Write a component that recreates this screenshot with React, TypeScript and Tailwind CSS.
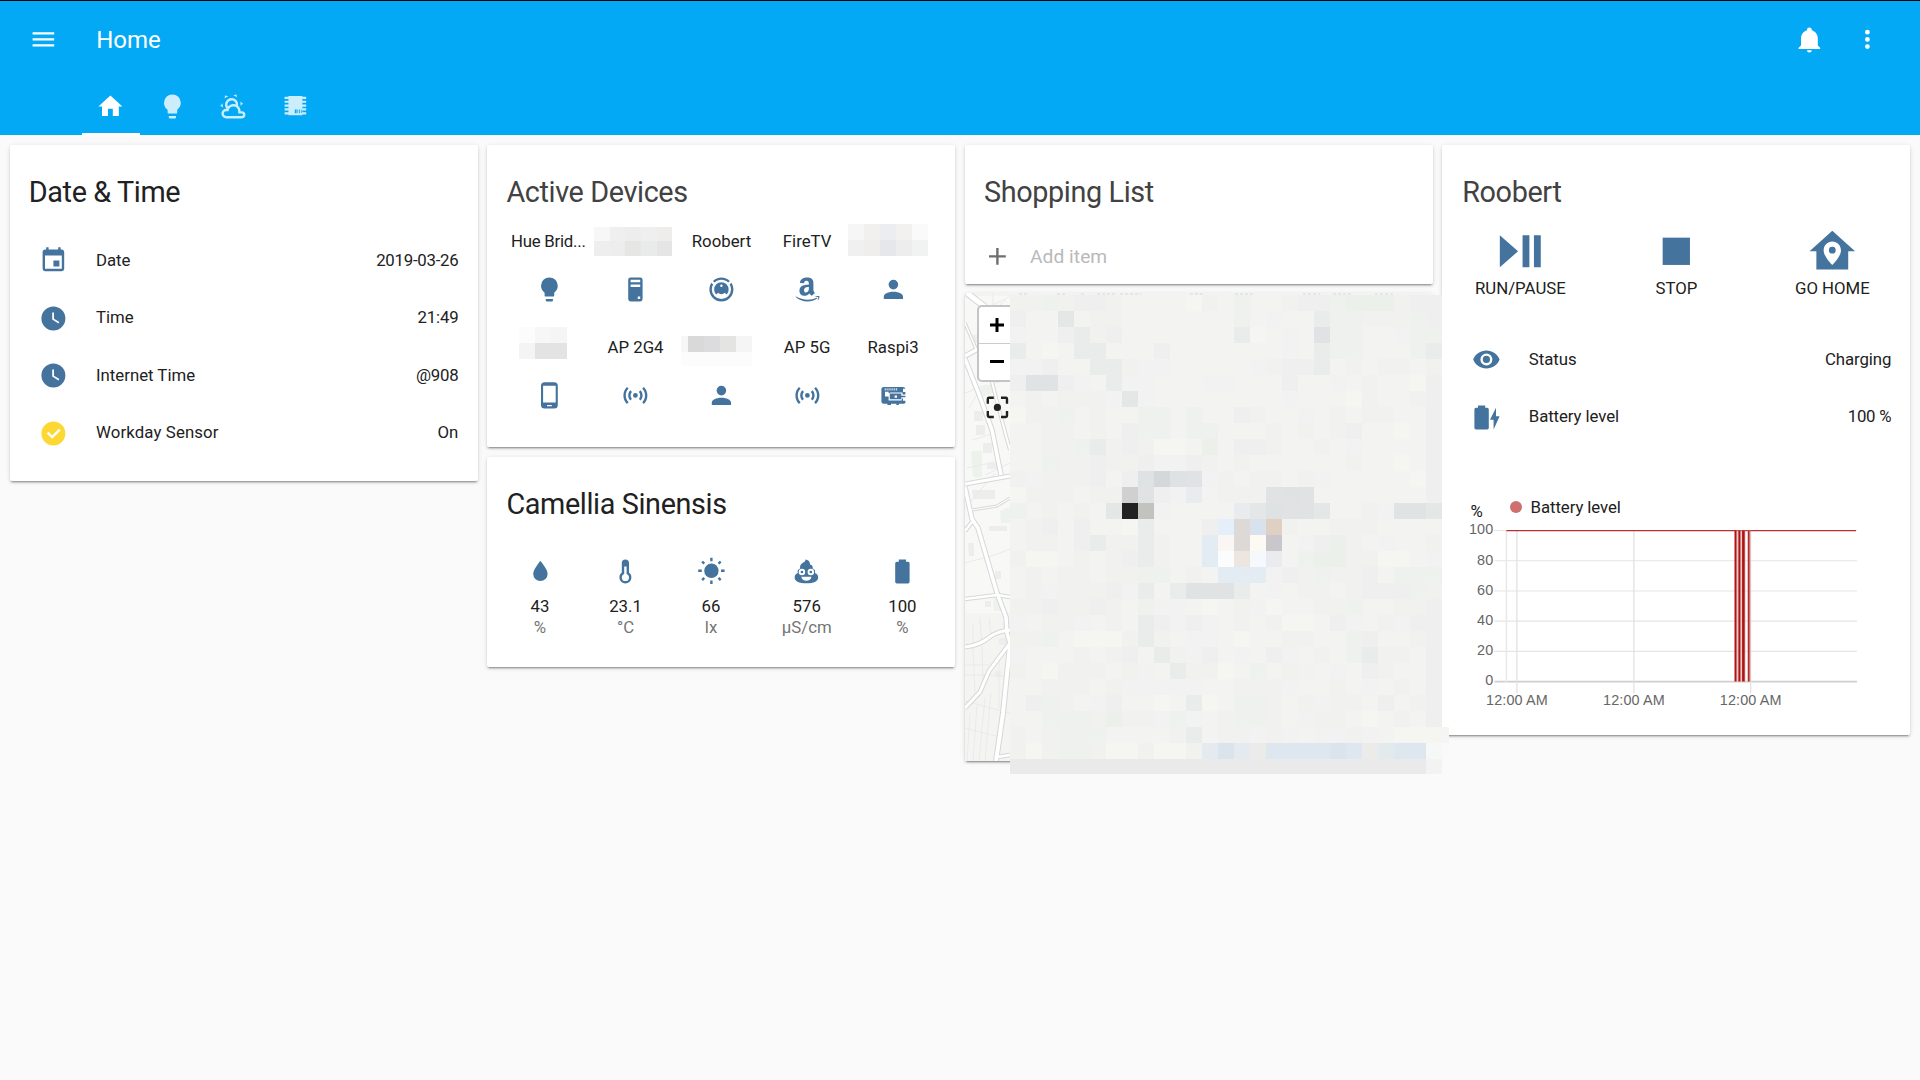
import React from 'react';

const ICONS = {
  menu: 'M3,6H21V8H3V6M3,11H21V13H3V11M3,16H21V18H3V16Z',
  home: 'M10,20V14H14V20H19V12H22L12,3L2,12H5V20H10Z',
  lightbulb:
    'M12,2A7,7 0 0,0 5,9C5,11.38 6.19,13.47 8,14.74V17A1,1 0 0,0 9,18H15A1,1 0 0,0 16,17V14.74C17.81,13.47 19,11.38 19,9A7,7 0 0,0 12,2M9,21A1,1 0 0,0 10,22H14A1,1 0 0,0 15,21V20H9V21Z',
  weather:
    'M12.74,5.47C15.1,6.5 16.35,9.03 15.92,11.46C17.19,12.56 18,14.19 18,16V16.17C18.31,16.06 18.65,16 19,16A3,3 0 0,1 22,19A3,3 0 0,1 19,22H6A4,4 0 0,1 2,18A4,4 0 0,1 6,14H6.27C5,12.45 4.6,10.24 5.5,8.26C6.72,5.5 9.97,4.24 12.74,5.47M11.93,7.3C10.16,6.5 8.09,7.31 7.31,9.07C6.85,10.09 6.93,11.22 7.41,12.13C8.5,10.83 10.16,10 12,10C12.7,10 13.38,10.12 14,10.34C13.94,9.06 13.18,7.86 11.93,7.3M13.55,3.64C13,3.4 12.45,3.23 11.88,3.12L14.37,1.82L15.27,4.71C14.76,4.29 14.19,3.93 13.55,3.64M6.09,4.44C5.6,4.79 5.17,5.19 4.8,5.63L4.91,2.82L7.87,3.5C7.25,3.71 6.65,4.03 6.09,4.44M18,9.71C17.91,9.12 17.78,8.55 17.59,8L19.97,9.5L17.92,11.73C18.03,11.08 18.05,10.4 18,9.71M3.04,11.3C3.11,11.9 3.24,12.47 3.43,13L1.06,11.5L3.1,9.28C3,9.93 2.97,10.61 3.04,11.3M19,18H16V16A4,4 0 0,0 12,12A4,4 0 0,0 8,16H6A2,2 0 0,0 4,18A2,2 0 0,0 6,20H19A1,1 0 0,0 20,19A1,1 0 0,0 19,18Z',
  chip: 'M6.2,3.4H17.8V4H21V5.8H17.8V7.2H21V9H17.8V10.4H21V12.2H17.8V13.6H21V15.4H17.8V16.8H21V18.8H17.8V19.4H6.2V18.8H3V16.8H6.2V15.4H3V13.6H6.2V12.2H3V10.4H6.2V9H3V7.2H6.2V5.8H3V4H6.2V3.4M11.5,14.6V17.8H13V14.6H11.5M13.7,14.6V17.8H14.3V14.6H13.7M15.1,14.6V17.8H15.8V14.6H15.1M16.6,14.6V17.8H17.2V14.6H16.6Z',
  bell: 'M21,19V20H3V19L5,17V11C5,7.9 7.03,5.17 10,4.29C10,4.19 10,4.1 10,4A2,2 0 0,1 12,2A2,2 0 0,1 14,4C14,4.1 14,4.19 14,4.29C16.97,5.17 19,7.9 19,11V17L21,19M14,21A2,2 0 0,1 12,23A2,2 0 0,1 10,21',
  dots: 'M12,16A2,2 0 0,1 14,18A2,2 0 0,1 12,20A2,2 0 0,1 10,18A2,2 0 0,1 12,16M12,10A2,2 0 0,1 14,12A2,2 0 0,1 12,14A2,2 0 0,1 10,12A2,2 0 0,1 12,10M12,4A2,2 0 0,1 14,6A2,2 0 0,1 12,8A2,2 0 0,1 10,6A2,2 0 0,1 12,4Z',
  calendar:
    'M19,19H5V8H19M16,1V3H8V1H6V3H5C3.89,3 3,3.89 3,5V19A2,2 0 0,0 5,21H19A2,2 0 0,0 21,19V5C21,3.89 20.1,3 19,3H18V1M17,12H12V17H17V12Z',
  clock:
    'M12,2A10,10 0 0,0 2,12A10,10 0 0,0 12,22A10,10 0 0,0 22,12A10,10 0 0,0 12,2M16.2,16.2L11,13V7H12.5V12.2L17,14.9L16.2,16.2Z',
  check:
    'M12,2A10,10 0 0,1 22,12A10,10 0 0,1 12,22A10,10 0 0,1 2,12A10,10 0 0,1 12,2M11,16.5L18,9.5L16.59,8.09L11,13.67L7.91,10.59L6.5,12L11,16.5Z',
  tower:
    'M8,2H16A2,2 0 0,1 18,4V20A2,2 0 0,1 16,22H8A2,2 0 0,1 6,20V4A2,2 0 0,1 8,2M8,4V6H16V4H8M16,8H8V10H16V8M16,18H14V20H16V18Z',
  vacuum:
    'M12,2C14.65,2 17.19,3.06 19.07,4.93L17.65,6.35C16.15,4.85 14.12,4 12,4C9.88,4 7.84,4.84 6.35,6.35L4.93,4.93C6.81,3.06 9.35,2 12,2M3.66,6.5L5.11,7.94C4.39,9.17 4,10.57 4,12A8,8 0 0,0 12,20A8,8 0 0,0 20,12C20,10.57 19.61,9.17 18.88,7.94L20.34,6.5C21.42,8.12 22,10.04 22,12A10,10 0 0,1 12,22A10,10 0 0,1 2,12C2,10.04 2.58,8.12 3.66,6.5M12,6A6,6 0 0,1 18,12C18,13.59 17.37,15.12 16.24,16.24L14.83,14.83C14.08,15.58 13.06,16 12,16C10.94,16 9.92,15.58 9.17,14.83L7.76,16.24C6.63,15.12 6,13.59 6,12A6,6 0 0,1 12,6M12,8A1,1 0 0,0 11,9A1,1 0 0,0 12,10A1,1 0 0,0 13,9A1,1 0 0,0 12,8Z',
  amazon:
    'M15.93,17.09C15.75,17.25 15.5,17.26 15.3,17.15C14.41,16.41 14.25,16.07 13.76,15.36C12.29,16.86 11.25,17.31 9.34,17.31C7.09,17.31 5.33,15.92 5.33,13.14C5.33,10.96 6.5,9.5 8.19,8.76C9.65,8.12 11.68,8 13.23,7.83V7.5C13.23,6.84 13.28,6.09 12.9,5.54C12.58,5.05 11.95,4.84 11.4,4.84C10.38,4.84 9.47,5.37 9.25,6.45C9.2,6.69 9,6.93 8.78,6.94L6.18,6.66C5.96,6.61 5.72,6.44 5.78,6.1C6.38,2.95 9.23,2 11.78,2C13.08,2 14.78,2.35 15.81,3.33C17.11,4.55 17,6.18 17,7.95V12.12C17,13.37 17.5,13.93 18,14.6C18.17,14.85 18.21,15.14 18,15.31L15.94,17.09H15.93M13.23,10.56V10C11.29,10 9.24,10.39 9.24,12.67C9.24,13.83 9.85,14.62 10.87,14.62C11.63,14.62 12.3,14.15 12.73,13.4C13.25,12.47 13.23,11.6 13.23,10.56M20.16,19.54C18,21.14 14.82,22 12.1,22C8.29,22 4.85,20.59 2.25,18.24C2.05,18.06 2.23,17.81 2.5,17.95C5.28,19.58 8.75,20.56 12.33,20.56C14.74,20.56 17.4,20.06 19.84,19.03C20.21,18.87 20.5,19.27 20.16,19.54M21.07,18.5C20.79,18.14 19.22,18.33 18.5,18.42C18.31,18.44 18.28,18.26 18.47,18.12C19.71,17.24 21.76,17.5 22,17.79C22.24,18.09 21.93,20.14 20.76,21.11C20.58,21.27 20.41,21.18 20.5,21C20.76,20.33 21.35,18.86 21.07,18.5Z',
  account:
    'M12,4A4,4 0 0,1 16,8A4,4 0 0,1 12,12A4,4 0 0,1 8,8A4,4 0 0,1 12,4M12,14C16.42,14 20,15.79 20,18V20H4V18C4,15.79 7.58,14 12,14Z',
  phone:
    'M17.25,18H6.75V4H17.25M14,21H10V20H14M16,1H8A3,3 0 0,0 5,4V20A3,3 0 0,0 8,23H16A3,3 0 0,0 19,20V4A3,3 0 0,0 16,1Z',
  accessPoint:
    'M4.93,4.93C3.12,6.74 2,9.24 2,12C2,14.76 3.12,17.26 4.93,19.07L6.34,17.66C4.89,16.22 4,14.22 4,12C4,9.79 4.89,7.78 6.34,6.34L4.93,4.93M19.07,4.93L17.66,6.34C19.11,7.78 20,9.79 20,12C20,14.22 19.11,16.22 17.66,17.66L19.07,19.07C20.88,17.26 22,14.76 22,12C22,9.24 20.88,6.74 19.07,4.93M7.76,7.76C6.67,8.85 6,10.35 6,12C6,13.65 6.67,15.15 7.76,16.24L9.17,14.83C8.45,14.11 8,13.11 8,12C8,10.89 8.45,9.89 9.17,9.17L7.76,7.76M16.24,7.76L14.83,9.17C15.55,9.89 16,10.89 16,12C16,13.11 15.55,14.11 14.83,14.83L16.24,16.24C17.33,15.15 18,13.65 18,12C18,10.35 17.33,8.85 16.24,7.76M12,10A2,2 0 0,0 10,12A2,2 0 0,0 12,14A2,2 0 0,0 14,12A2,2 0 0,0 12,10Z',
  board:
    'M4,4.9H20A2,2 0 0,1 22,6.5H20V9.2H22V11.2H19.6V9.6H9V10.2H8V9H5V13H8V16.2H19V14.6H20V16.4H22V18A1.4,1.4 0 0,1 20.6,19H16.5V20H14.5V19H10V20H7V19H4A2,2 0 0,1 2,17V7A2,2 0 0,1 4,4.9M4.8,6V8H5.5V6H4.8M6.4,6V8H7.1V6H6.4M8,6V8H8.7V6H8M9.6,6V8H10.3V6H9.6M11.2,6V8H11.9V6H11.2M12.8,6V8H13.5V6H12.8M14.4,6V8H15.1V6H14.4M9,10.4V15.2H18.6V13.6H22V12.3H18.6V10.4H9M13,12V14H15V12H13Z',
  water: 'M12,20A6,6 0 0,1 6,14C6,10 12,3.25 12,3.25C12,3.25 18,10 18,14A6,6 0 0,1 12,20Z',
  thermometer:
    'M17,17A5,5 0 0,1 12,22A5,5 0 0,1 7,17C7,15.36 7.79,13.91 9,13V5A3,3 0 0,1 12,2A3,3 0 0,1 15,5V13C16.21,13.91 17,15.36 17,17M11,8V14.17C9.83,14.58 9,15.69 9,17A3,3 0 0,0 12,20A3,3 0 0,0 15,17C15,15.69 14.17,14.58 13,14.17V8H11Z',
  sun: 'M3.55,18.54L4.96,19.95L6.76,18.16L5.34,16.74M11,22.45C11.32,22.45 13,22.45 13,22.45V19.5H11M12,5.5A6,6 0 0,0 6,11.5A6,6 0 0,0 12,17.5A6,6 0 0,0 18,11.5C18,8.18 15.31,5.5 12,5.5M20,12.5H23V10.5H20M17.24,18.16L19.04,19.95L20.45,18.54L18.66,16.74M20.45,4.46L19.04,3.05L17.24,4.84L18.66,6.26M13,0.55H11V3.5H13M4,10.5H1V12.5H4M6.76,4.84L4.96,3.05L3.55,4.46L5.34,6.26L6.76,4.84Z',
  poop: 'M11.2,2C11.2,3.4 10.8,3.7 9.7,4.4C7.6,5.6 6.2,7.2 6.8,9.6C4.9,10 4.3,11.8 4.9,13.3C3,13.8 2.2,15.4 2.2,17C2.2,20.3 6,21.9 12,21.9C18,21.9 21.8,20.3 21.8,17C21.8,15.4 21,13.8 19.1,13.3C19.7,11.8 19.1,10 17.2,9.6C17.7,7.6 16.6,6.4 15.1,6.2C15.1,3.9 13.6,2.3 11.2,2M8.3,9.8A2.7,2.7 0 0,1 11,12.5A2.7,2.7 0 0,1 8.3,15.2A2.7,2.7 0 0,1 5.6,12.5A2.7,2.7 0 0,1 8.3,9.8M15.7,9.8A2.7,2.7 0 0,1 18.4,12.5A2.7,2.7 0 0,1 15.7,15.2A2.7,2.7 0 0,1 13,12.5A2.7,2.7 0 0,1 15.7,9.8M8.3,11.4A1.1,1.1 0 0,0 7.2,12.5A1.1,1.1 0 0,0 8.3,13.6A1.1,1.1 0 0,0 9.4,12.5A1.1,1.1 0 0,0 8.3,11.4M15.7,11.4A1.1,1.1 0 0,0 14.6,12.5A1.1,1.1 0 0,0 15.7,13.6A1.1,1.1 0 0,0 16.8,12.5A1.1,1.1 0 0,0 15.7,11.4M7.8,16.4H16.2C16,18.4 14.2,19.7 12,19.7C9.8,19.7 8,18.4 7.8,16.4Z',
  battery:
    'M16.67,4H15V2H9V4H7.33A1.33,1.33 0 0,0 6,5.33V20.67C6,21.4 6.6,22 7.33,22H16.67A1.33,1.33 0 0,0 18,20.67V5.33C18,4.6 17.4,4 16.67,4Z',
  plus: 'M19,13H13V19H11V13H5V11H11V5H13V11H19V13Z',
  focus:
    'M12,9A3,3 0 0,0 9,12A3,3 0 0,0 12,15A3,3 0 0,0 15,12A3,3 0 0,0 12,9M19,19H15V21H19A2,2 0 0,0 21,19V15H19M19,3H15V5H19V9H21V5A2,2 0 0,0 19,3M5,5H9V3H5A2,2 0 0,0 3,5V9H5M5,15H3V19A2,2 0 0,0 5,21H9V19H5V15Z',
  playPause: 'M3,5V19L11,12M13,19H16V5H13M18,5V19H21V5',
  stop: 'M18,18H6V6H18V18Z',
  homeMarker:
    'M12,3L2,12H5V20H19V12H22L12,3M12,7.7C14.1,7.7 15.8,9.4 15.8,11.5C15.8,14.5 12,18 12,18C12,18 8.2,14.5 8.2,11.5C8.2,9.4 9.9,7.7 12,7.7M12,10A1.5,1.5 0 0,0 10.5,11.5A1.5,1.5 0 0,0 12,13A1.5,1.5 0 0,0 13.5,11.5A1.5,1.5 0 0,0 12,10Z',
  eye: 'M12,9A3,3 0 0,0 9,12A3,3 0 0,0 12,15A3,3 0 0,0 15,12A3,3 0 0,0 12,9M12,17A5,5 0 0,1 7,12A5,5 0 0,1 12,7A5,5 0 0,1 17,12A5,5 0 0,1 12,17M12,4.5C7,4.5 2.73,7.61 1,12C2.73,16.39 7,19.5 12,19.5C17,19.5 21.27,16.39 23,12C21.27,7.61 17,4.5 12,4.5Z',
  charging:
    'M23,11H20V4L15,14H18V22M12.67,4H11V2H5V4H3.33A1.33,1.33 0 0,0 2,5.33V20.67C2,21.4 2.6,22 3.33,22H12.67A1.33,1.33 0 0,0 14,20.67V5.33C14,4.6 13.4,4 12.67,4Z',
};

type IconName = keyof typeof ICONS;

function Icon({ name, className = '' }: { name: IconName; className?: string }) {
  return (
    <svg viewBox="0 0 24 24" fill="currentColor" fillRule="evenodd" className={`block shrink-0 ${className}`}>
      <path d={ICONS[name]} />
    </svg>
  );
}

const ICON = 'h-[28.8px] w-[28.8px]';

function Card({ className = '', children }: { className?: string; children?: React.ReactNode }) {
  return (
    <section
      className={`relative mx-[4.8px] rounded-[2px] bg-white shadow-[0_2px_2px_0_rgba(0,0,0,0.14),0_1px_5px_0_rgba(0,0,0,0.12),0_3px_1px_-2px_rgba(0,0,0,0.2)] ${className}`}
    >
      {children}
    </section>
  );
}

function Title({ dim = false, children }: { dim?: boolean; children: React.ReactNode }) {
  return (
    <h2
      className={`h-[48px] pt-px text-[28.8px] leading-[48px] font-normal tracking-[-0.013em] ${dim ? 'text-[#424242]' : 'text-[#212121]'}`}
    >
      {children}
    </h2>
  );
}

interface RowProps {
  icon: IconName;
  label: string;
  value: string;
  color?: string;
  labelClass?: string;
  valueClass?: string;
}

function Row({ icon, label, value, color = 'text-[#44739e]', labelClass = '', valueClass = '' }: RowProps) {
  return (
    <div className="flex h-[48px] items-center">
      <div className={`flex h-[48px] w-[48px] items-center justify-center pt-[0.6px] pl-[0.8px] ${color}`}>
        <Icon name={icon} className={ICON} />
      </div>
      <div className={`ml-[19.2px] flex-1 pb-[1.2px] ${labelClass}`}>{label}</div>
      <div className={`pb-[1.2px] ${valueClass}`}>{value}</div>
    </div>
  );
}

function Mosaic({ rows, className }: { rows: string[][]; className: string }) {
  return (
    <div className={`absolute flex flex-col overflow-hidden ${className}`}>
      {rows.map((row, i) => (
        <div key={i} className="flex flex-1">
          {row.map((c, j) => (
            <div key={j} className="flex-1" style={{ backgroundColor: c }} />
          ))}
        </div>
      ))}
    </div>
  );
}

const DEVICES: { name?: string; icon: IconName; cover?: React.ReactNode; nameClass?: string }[] = [
  { name: 'Hue Brid...', icon: 'lightbulb', nameClass: 'tracking-[-0.25px] -ml-[2px]' },
  {
    icon: 'tower',
    cover: (
      <Mosaic
        className="top-[-2px] left-[2px] h-[29px] w-[78px]"
        rows={[
          ['#f7f7f7', '#efefef', '#ededed', '#efefef', '#eeedeb'],
          ['#eeeeee', '#ededed', '#e6e6e4', '#e8ebe9', '#e5e5e5'],
        ]}
      />
    ),
  },
  { name: 'Roobert', icon: 'vacuum', nameClass: 'ml-[0.6px]' },
  { name: 'FireTV', icon: 'amazon' },
  {
    icon: 'account',
    cover: (
      <Mosaic
        className="top-[-5px] left-[-2px] h-[32px] w-[80px]"
        rows={[
          ['#f6f6f6', '#f2f0ef', '#ecedf0', '#f2f1ef', '#fafafa'],
          ['#f0f0f0', '#f0eeec', '#e5e7ea', '#ededee', '#f0f3f2'],
        ]}
      />
    ),
  },
  {
    icon: 'phone',
    cover: (
      <Mosaic
        className="top-[-8px] left-[13px] h-[32px] w-[48px]"
        rows={[
          ['#fcfcfc', '#f7f7f7', '#f5f5f5'],
          ['#f5f4f2', '#e3e3e3', '#e3e3e3'],
        ]}
      />
    ),
  },
  { name: 'AP 2G4', icon: 'accessPoint', nameClass: 'ml-[0.6px]' },
  {
    icon: 'account',
    cover: (
      <div className="absolute top-px left-[3px] w-[71px]">
        <div className="flex h-[16px]">
          <div className="w-[7px] bg-[#f7f7f7]" />
          <div className="w-[16px] bg-[#d9d9d9]" />
          <div className="w-[16px] bg-[#dcdcde]" />
          <div className="w-[16px] bg-[#e4e4e2]" />
          <div className="w-[16px] bg-[#f5f5f5]" />
        </div>
        <div className="h-[14px] bg-[#fcfcfc]" />
      </div>
    ),
  },
  { name: 'AP 5G', icon: 'accessPoint' },
  { name: 'Raspi3', icon: 'board' },
];

const SENSORS: { icon: IconName; value: string; unit: string; wide?: boolean }[] = [
  { icon: 'water', value: '43', unit: '%' },
  { icon: 'thermometer', value: '23.1', unit: '°C' },
  { icon: 'sun', value: '66', unit: 'lx' },
  { icon: 'poop', value: '576', unit: 'µS/cm', wide: true },
  { icon: 'battery', value: '100', unit: '%' },
];

const SHADES: Record<string, string> = {
  '.': '#f3f3f1',
  a: '#f1f1ef',
  b: '#efeff0',
  c: '#f5f5f2',
  k: '#f2f2f3',
  g: '#eef1ed',
  G: '#ebf1ea',
  h: '#e9ecea',
  i: '#e5e7e6',
  j: '#e1e2e4',
  H: '#dee2e3',
  J: '#d4d8da',
  l: '#e9ebef',
  D: '#d0d0d0',
  X: '#222222',
  Y: '#c2c2bf',
  P: '#e4effa',
  Q: '#dcd9d6',
  R: '#d7e2ec',
  S: '#e0d0c4',
  T: '#e3ebf3',
  U: '#f9f6f3',
  W: '#fdfaf3',
  V: '#c9c7cb',
  Z: '#fbfcfd',
  M: '#ece5e0',
  N: '#f5f8fd',
  n: '#e4eaf0',
  o: '#dae4ec',
  p: '#dee7ef',
  q: '#ebebea',
  r: '#e2eaee',
  s: '#f5f8f6',
  e: '#eaeaea',
  f: '#f3f3f3',
};

const MAP_CELLS = [
  'aagabba....ca.g..abbgGGGabb',
  'b..i.aa.......g.k..hggaaagb',
  'k..bhab.......hc.k.jgg..kgg',
  'h.c.hh...b.......k.hgg...gh',
  'kkb..hhakk.....kabbh.a.aa.a',
  'bjjbk.hkk...kk...b..k.a..cb',
  '.a.aaakik........k...ca..ab',
  'caag.a..gg.g..ba..k.a.aa..b',
  '..aa.a.bgg.gg...a.a.ab..c.b',
  '..aaghabacc.G.bba..a.k....b',
  '..gaabaabkkba.a......a..c.b',
  'akaaab.bHJHjka.aa.ak.....cb',
  'caaa.aaDjbkl.aaajHj.......b',
  'g.a.a.iXYk....liHjji..akjji',
  '.ab.b..ch...bPQRSa..aaa....',
  '.aa.bhaaha..TUQWV.kbGa.k..a',
  'acc.a.abha..TZMNl.gGGaacc.k',
  '.a.aa.aagg.a.TTTkbagaab.ggg',
  '.akaaabkh.hjjjh.k.aa.abbbga',
  'aabaaba.gkk.c.akc..aag..aab',
  'k.aak.a.hbkbk.a.acc.bk.akbb',
  'aag.cccaha.kk.c..aa..gb..ab',
  'k...a.ab.hakb.k.bk.a.ghaa.b',
  'a.caaa.ak.haac.g.ak.k.ba..b',
  '..aaa.akkkkk..aaak..a.k.a.b',
  '.bga.kb..c.hc.gga.akaa.b.ab',
  '..gggaGaakgk.agga.kaa.c.a.b',
  'a.aggg....ah.aakak.kkak.ccc',
  'acaggaccaccanonqppppopqrpps',
  'eeeeeeeeeeeeeeeeeeeeeeeeeef',
];

/* Pale street map: casings first, then the road surfaces. */
const ROADS: [string, number][] = [
  ['M2,0 L20,14', 5],
  ['M0,63 L13,56', 3.5],
  ['M0,66 Q14,100 27,137 L36,182', 3.5],
  ['M26,85 Q36,125 45,157', 2],
  ['M0,191 L45,183', 3],
  ['M0,194 L7,226 L13,235 L32,300 L41,324 L42,340 L45,350', 3.5],
  ['M0,238 L7,229', 2.5],
  ['M7,217 L32,213 L45,205', 1.2],
  ['M0,306 L32,302 L45,304', 2.5],
  ['M0,354 Q14,353 26,343 Q34,338 45,337', 3],
  ['M45,350 L24,378 L15,399 L0,415', 3],
  ['M45,352 L38,420 L31,468', 4],
  ['M32,464 L45,462', 2.5],
  ['M0,30 L12,58', 1.5],
];

const THIN =
  'M28,0V12L40,6M33,14L45,2M0,100L22,92M4,115L14,98M30,90L45,86M7,147L30,140M2,175L34,168M0,215L30,180M20,182L45,170M0,270L30,262L45,256M8,330V350M15,325L17,352M24,325L26,345M0,372H24M0,382H22M8,355L10,400M17,352L18,392M0,408L45,420M5,420L2,468M12,412L8,468M20,405L14,468M26,400L20,468M0,435L38,445M24,382L45,384M34,365L34,415';

function StreetMap() {
  return (
    <svg viewBox="0 0 468 468" className="block h-[468px] w-[468px] rounded-[2px]">
      <rect width="468" height="468" fill="#f8f8f7" />
      <path d="M0,320H45V468H0Z" fill="#f4f4f3" />
      <path d="M0,0H468V3H0Z" fill="#f3f3f2" />
      <path d="M6,158H17V184H8ZM35,218L45,214V230H36ZM28,304H36V318H29ZM15,96L28,90V100L18,104Z" fill="#edf2ec" />
      <path
        d="M7,197H30V206H8ZM18,150H27V160H18ZM22,170H32V176H22ZM3,250H9V263H4ZM24,233H42V238H24ZM30,278H36V286H30ZM34,345H45V352H34ZM9,118H18V128H9ZM11,132H20V142H11ZM8,42H13V50H8ZM20,308H26V314H20ZM30,378H36V384H30Z"
        fill="#ededec"
      />
      <path d={THIN} fill="none" stroke="#e9eaea" strokeWidth="1" />
      {ROADS.map(([d, w]) => (
        <path key={d} d={d} fill="none" stroke="#d6d7d8" strokeWidth={w + 2} />
      ))}
      {ROADS.map(([d, w]) => (
        <path key={d} d={d} fill="none" stroke="#ffffff" strokeWidth={w} />
      ))}
      <path
        d="M54,1H64M92,1H100M116,1H119M132,1H150M155,1H176M225,1H238M270,1H290M338,1H355M368,1H386M410,1H430"
        stroke="#e0e2e3"
        strokeWidth="1.5"
        strokeDasharray="3 2"
      />
    </svg>
  );
}

const GRID_Y = [100, 80, 60, 40, 20, 0];

/* Battery history: a 0–100 scale, 30.2px per 20 points. */
function BatteryChart() {
  return (
    <svg
      viewBox="-8 0 416 200"
      className="-ml-[7.6px] block h-[200px] w-[416px]"
      fontFamily='"Liberation Sans", Arial, sans-serif'
      fontSize="14.4"
    >
      {GRID_Y.map((v, i) => (
        <g key={v}>
          <path
            d={`M23.5,${10.5 + i * 30.24}H386`}
            stroke={v === 0 ? '#cfcfcf' : '#e5e5e5'}
            strokeWidth={v === 0 ? 1.8 : 1.2}
          />
          <text x="22.4" y={14.3 + i * 30.2} textAnchor="end" fill="#666666" letterSpacing="0.15">
            {v}
          </text>
        </g>
      ))}
      <path d="M35.4,10V162" stroke="#e9e9e9" strokeWidth="1.6" />
      {[45.9, 162.9, 279.7].map((x) => (
        <g key={x}>
          <path d={`M${x},10V173.5`} stroke="#e0e0e0" strokeWidth="1.2" />
          <text x={x} y="185" textAnchor="middle" fill="#666666" letterSpacing="0.12">
            12:00 AM
          </text>
        </g>
      ))}
      <path d="M35.4,10.6H385" stroke="#bb3030" strokeWidth="1.1" />
      <path d="M269.6,10.5V161.5" stroke="#e6b5b5" strokeWidth="10" opacity="0.7" />
      <path d="M277.9,10.5V161.5" stroke="#dfa0a0" strokeWidth="3.4" opacity="0.8" />
      <path d="M264.5,10.5V161.5M268.4,10.5V161.5" stroke="#ae1414" strokeWidth="2" />
      <path d="M272.4,10.5V161.5" stroke="#ae1414" strokeWidth="2.6" />
      <path d="M277.8,10.5V161.5" stroke="#b01c1c" strokeWidth="1.4" />
    </svg>
  );
}

const ACTIONS: { icon: IconName; label: string }[] = [
  { icon: 'playPause', label: 'RUN/PAUSE' },
  { icon: 'stop', label: 'STOP' },
  { icon: 'homeMarker', label: 'GO HOME' },
];

export default function App() {
  return (
    <div className="min-h-[1080px] w-[1920px] overflow-hidden bg-[#fafafa] font-['Roboto',sans-serif] text-[16.8px] leading-[24px] text-[#212121]">
      <header className="h-[135px] border-t border-black bg-[#03a9f4] text-white">
        <div className="flex h-[77px] items-center pr-[38px] pl-[28.8px]">
          <Icon name="menu" className={ICON} />
          <h1 className="ml-[38.6px] flex-1 text-[24px] leading-[28px] font-normal">Home</h1>
          <Icon name="bell" className={`${ICON} mr-[29px]`} />
          <Icon name="dots" className={ICON} />
        </div>
        <nav className="flex h-[57px] pl-[82px]">
          <div className="flex w-[58px] items-center justify-center border-b-2 border-white pt-[2.4px] pr-px">
            <Icon name="home" className={ICON} />
          </div>
          <div className="ml-[2px] flex w-[60px] items-center justify-center opacity-80">
            <Icon name="lightbulb" className={ICON} />
          </div>
          <div className="ml-px flex w-[61px] items-center justify-center opacity-80">
            <Icon name="weather" className={ICON} />
          </div>
          <div className="flex w-[63px] items-center justify-center pt-[0.6px] opacity-80">
            <Icon name="chip" className={ICON} />
          </div>
        </nav>
      </header>

      <main className="grid grid-cols-4 items-start px-[4.8px] pt-[9.6px]">
        <div>
          <Card className="h-[336px] px-[19.2px] pt-[22px]">
            <Title>Date &amp; Time</Title>
            <div className="flex flex-col gap-[9.6px] pt-[21.6px]">
              <Row icon="calendar" label="Date" value="2019-03-26" valueClass="tracking-[-0.25px]" />
              <Row icon="clock" label="Time" value="21:49" valueClass="tracking-[-0.2px]" />
              <Row icon="clock" label="Internet Time" value="@908" valueClass="tracking-[-0.25px]" />
              <Row
                icon="check"
                label="Workday Sensor"
                value="On"
                color="text-[#fdd835]"
                labelClass="tracking-[0.13px]"
              />
            </div>
          </Card>
        </div>

        <div className="flex flex-col gap-[9.6px]">
          <Card className="h-[302.4px] px-[19.2px] pt-[22px]">
            <Title dim>Active Devices</Title>
            <div className="grid grid-cols-5 pt-[14.4px]">
              {DEVICES.map((d, i) => (
                <div key={i} className="relative flex h-[105.8px] flex-col items-center">
                  <div className={`h-[24px] leading-[24px] whitespace-nowrap ${d.nameClass ?? ''}`}>{d.name}</div>
                  {d.cover}
                  <div className="mt-[12.4px] flex h-[48px] items-center text-[#44739e]">
                    <Icon name={d.icon} className={ICON} />
                  </div>
                </div>
              ))}
            </div>
          </Card>
          <Card className="h-[210px] px-[19.2px] pt-[22px]">
            <Title>Camellia Sinensis</Title>
            <div className="flex justify-between pt-[30px]">
              {SENSORS.map((s) => (
                <div key={s.icon} className={`flex flex-col items-center ${s.wide ? 'w-[87.5px]' : 'w-[67.2px]'}`}>
                  <Icon name={s.icon} className={`${ICON} text-[#44739e]`} />
                  <div className="mt-[11px] leading-[21px]">{s.value}</div>
                  <div className="leading-[21px] text-[#757575]">{s.unit}</div>
                </div>
              ))}
            </div>
          </Card>
        </div>

        <div className="flex flex-col gap-[9.6px]">
          <Card className="h-[139.2px] px-[19.2px] pt-[22px]">
            <Title dim>Shopping List</Title>
            <div className="flex items-center pt-[27.4px]">
              <div className="flex w-[26px] justify-center">
                <Icon name="plus" className={`${ICON} text-[#6f6f6f]`} />
              </div>
              <div className="ml-[20px] pt-[1.6px] text-[19.2px] tracking-[0.05px] text-[#b9b9b9]">Add item</div>
            </div>
          </Card>
          <Card className="h-[468px]">
            <StreetMap />
            <div className="absolute top-[12px] left-[12.4px] w-[40px] rounded-[5px] border-2 border-[#c4c4c3] bg-white">
              <div className="flex h-[37px] items-center justify-center border-b border-[#cccccc]">
                <svg viewBox="0 0 14 14" className="h-[14px] w-[14px]">
                  <path d="M0,5.5H14V8.5H0ZM5.5,0H8.5V14H5.5Z" />
                </svg>
              </div>
              <div className="flex h-[36px] items-center justify-center pb-px">
                <div className="h-[3px] w-[14px] bg-black" />
              </div>
            </div>
            <Icon name="focus" className={`${ICON} absolute top-[99.5px] left-[18.2px] text-[#212121]`} />
            <div className="absolute top-[2px] left-[45px] z-10">
              {MAP_CELLS.map((row, r) => (
                <div key={r} className={r === MAP_CELLS.length - 1 ? 'flex h-[15px]' : 'flex h-[16px]'}>
                  {row.split('').map((c, i) => (
                    <div key={i} className="w-[16px]" style={{ backgroundColor: SHADES[c] }} />
                  ))}
                  {r === 27 && <div className="-mr-[7px] w-[7px] bg-[#f5f5f4]" />}
                  {r === 28 && <div className="-mr-[7px] w-[7px] bg-[#f9f9f9]" />}
                </div>
              ))}
            </div>
          </Card>
        </div>

        <div>
          <Card className="h-[590.4px] px-[19.2px] pt-[22px]">
            <div className="pl-[0.6px]">
              <Title dim>Roobert</Title>
            </div>
            <div className="-mx-[19.2px] grid grid-cols-3 pt-[9px]">
              {ACTIONS.map((a) => (
                <div key={a.label} className="flex flex-col items-center">
                  <Icon name={a.icon} className="h-[54.6px] w-[54.6px] text-[#44739e]" />
                  <div className="-mt-[2px]">{a.label}</div>
                </div>
              ))}
            </div>
            <div className="flex flex-col gap-[9.6px] pt-[35.2px]">
              <Row icon="eye" label="Status" value="Charging" valueClass="tracking-[-0.1px]" />
              <Row
                icon="charging"
                label="Battery level"
                value="100 %"
                labelClass="tracking-[-0.08px]"
                valueClass="tracking-[-0.25px]"
              />
            </div>
            <div className="mt-[53.4px] ml-[9px]">
              <div className="flex h-[25.4px] items-start">
                <div className="w-[33px] pt-[5px] text-[16.8px]">%</div>
                <div className="mt-[7px] ml-[6px] h-[12px] w-[12px] rounded-full bg-[#cf7070]" />
                <div className="ml-[9px] pt-px tracking-[-0.08px]">Battery level</div>
              </div>
              <BatteryChart />
            </div>
          </Card>
        </div>
      </main>
    </div>
  );
}
